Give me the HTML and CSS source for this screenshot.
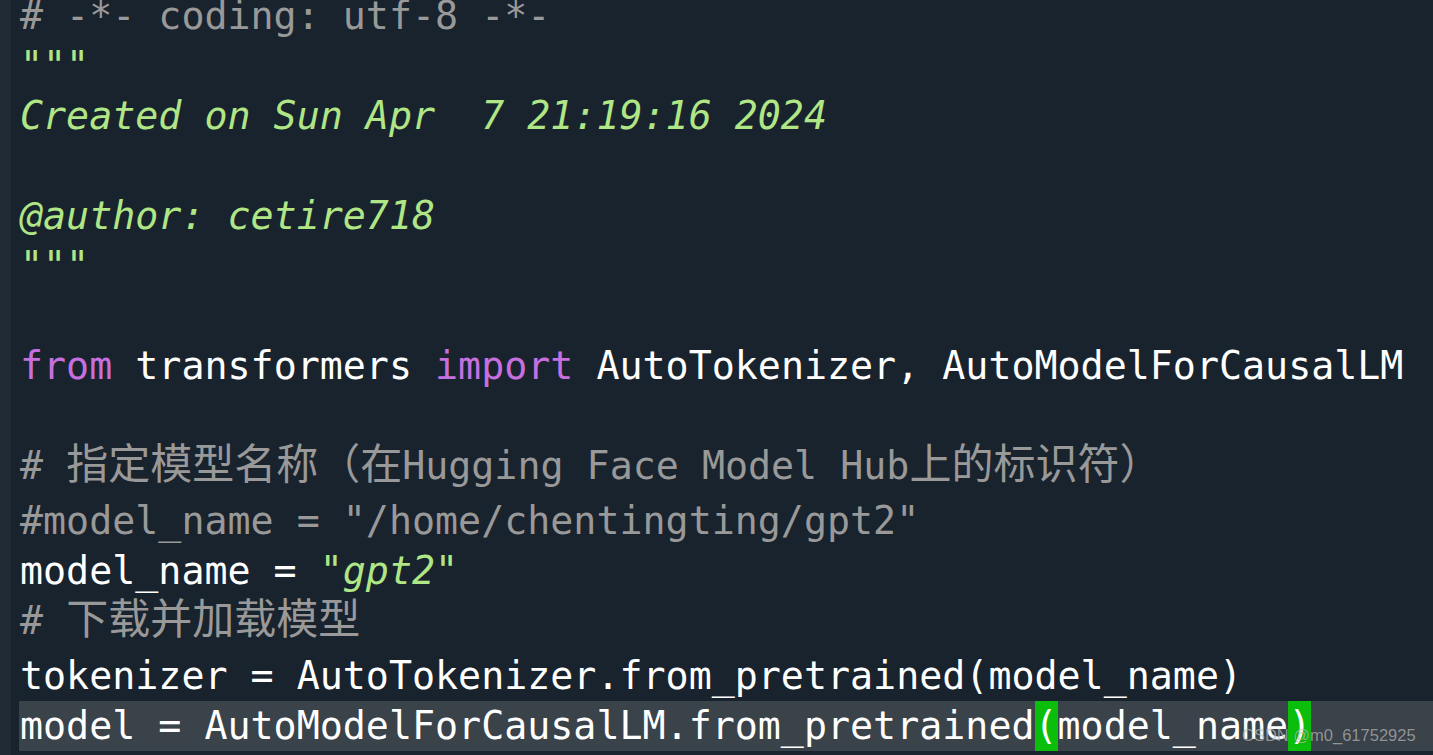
FILE: index.html
```html
<!DOCTYPE html>
<html lang="zh-CN">
<head>
  <meta charset="UTF-8" />
  <title>editor</title>
  <link rel="stylesheet" href="styles.css">
</head>
<body>

  <div class="editor">
    <div class="gutter"></div>
    <div class="code">
      <div class="line"><span class="cm"># -*- coding: utf-8 -*-</span></div>
      <div class="line"><span class="str">"""</span></div>
      <div class="line"><span class="str">Created on Sun Apr  7 21:19:16 2024</span></div>
      <div class="line"><span class="str"></span></div>
      <div class="line"><span class="str">@author: cetire718</span></div>
      <div class="line"><span class="str">"""</span></div>
      <div class="line"></div>
      <div class="line"><span class="kw">from</span> transformers <span class="kw">import</span> AutoTokenizer, AutoModelForCausalLM</div>
      <div class="line"></div>
      <div class="line tall"><span class="cm"># <span class="cjk">指定模型名称（在</span>Hugging Face Model Hub<span class="cjk">上的标识符）</span></span></div>
      <div class="line"><span class="cm">#model_name = "/home/chentingting/gpt2"</span></div>
      <div class="line">model_name = <span class="str">"gpt2"</span></div>
      <div class="line tall"><span class="cm"># <span class="cjk">下载并加载模型</span></span></div>
      <div class="line">tokenizer = AutoTokenizer.from_pretrained(model_name)</div>
      <div class="line current">model = AutoModelForCausalLM.from_pretrained<span class="paren">(</span>model_name<span class="paren">)</span></div>
    </div>
  </div>

  <div class="watermark">CSDN @m0_61752925</div>

</body>
</html>
```

FILE: styles.css
```css
body {
  margin: 0;
  background: #19232d;
  overflow: hidden;
}

.editor {
  display: flex;
  height: 755px;
  overflow: hidden;
}

.gutter {
  width: 11px;
  flex-shrink: 0;
  background: #222b35;
}

.code {
  flex: 1;
  margin-left: 8px;
  margin-top: -9px;
  font-family: "DejaVu Sans Mono", "Noto Sans CJK SC", monospace;
  font-size: 38.3px;
  color: #ffffff;
}

.line {
  height: 50px;
  line-height: 50px;
  padding-left: 1px;
  white-space: pre;
}

.line.tall {
  height: 55px;
}

.line.current {
  background: #3a424a;
}

.cm {
  color: #999999;
}

.str {
  color: #b0e686;
  font-style: italic;
}

.kw {
  color: #c670e0;
}

.cjk {
  font-family: "Noto Sans CJK SC", sans-serif;
  font-size: 42px;
  line-height: 0;
}

.paren {
  display: inline-block;
  background: #0bbe0b;
  height: 50px;
  vertical-align: top;
}

.watermark {
  position: absolute;
  left: 1242px;
  top: 727px;
  font-family: "Liberation Sans", Arial, sans-serif;
  font-size: 16.5px;
  line-height: 17px;
  color: rgba(255, 255, 255, 0.5);
  text-shadow: 0 0 1px rgba(0, 0, 0, 0.4);
}
```
